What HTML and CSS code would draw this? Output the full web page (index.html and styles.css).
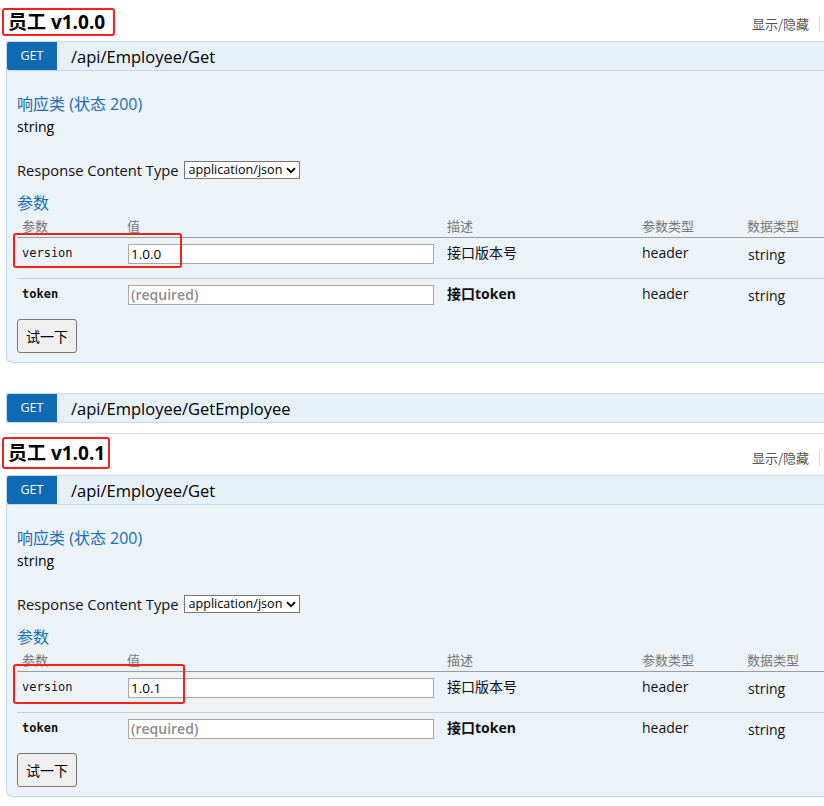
FILE: index.html
```html
<!DOCTYPE html>
<html lang="zh-CN">
<head>
<meta charset="utf-8">
<title>员工 API</title>
<link rel="stylesheet" href="styles.css">
</head>
<body>
<div class="page">

  <section class="resource">
    <div class="res-head">
      <h2 class="res-title"><span class="mark mark-a">员工 v1.0.0</span></h2>
      <ul class="res-opts"><li class="opt">显示/隐藏</li></ul>
    </div>
    <div class="ops">
      <div class="op">
        <div class="op-head"><span class="verb">GET</span><span class="path">/api/Employee/Get</span></div>
        <div class="op-body">
          <h4 class="sec sec-first">响应类 (状态 200)</h4>
          <div class="model">string</div>
          <div class="ctype">Response Content Type <span class="sel-wrap"><select class="sel"><option>application/json</option></select><svg class="chev" width="10" height="7" viewBox="0 0 10 7"><path d="M1 1.2 L5 5.2 L9 1.2" fill="none" stroke="#000" stroke-width="1.8"/></svg></span></div>
          <h4 class="sec sec-params">参数</h4>
          <table class="params">
            <colgroup><col class="c1"><col class="c2"><col class="c3"><col class="c4"><col></colgroup>
            <thead><tr><th>参数</th><th>值</th><th>描述</th><th>参数类型</th><th>数据类型</th></tr></thead>
            <tbody>
              <tr class="row-first"><td class="pname">version</td><td><input class="pval" type="text" value="1.0.0"></td><td class="pdesc">接口版本号</td><td>header</td><td class="dtype">string</td></tr>
              <tr><td class="pname req">token</td><td><input class="pval" type="text" placeholder="(required)"></td><td class="pdesc req">接口token</td><td>header</td><td class="dtype">string</td></tr>
            </tbody>
          </table>
          <button class="try" type="button">试一下</button>
          <div class="note note-a"></div>
        </div>
      </div>
      <div class="op op-collapsed">
        <div class="op-head"><span class="verb">GET</span><span class="path">/api/Employee/GetEmployee</span></div>
      </div>
    </div>
  </section>

  <section class="resource">
    <div class="res-head">
      <h2 class="res-title"><span class="mark mark-b">员工 v1.0.1</span></h2>
      <ul class="res-opts"><li class="opt">显示/隐藏</li></ul>
    </div>
    <div class="ops">
      <div class="op">
        <div class="op-head"><span class="verb">GET</span><span class="path">/api/Employee/Get</span></div>
        <div class="op-body">
          <h4 class="sec sec-first">响应类 (状态 200)</h4>
          <div class="model">string</div>
          <div class="ctype">Response Content Type <span class="sel-wrap"><select class="sel"><option>application/json</option></select><svg class="chev" width="10" height="7" viewBox="0 0 10 7"><path d="M1 1.2 L5 5.2 L9 1.2" fill="none" stroke="#000" stroke-width="1.8"/></svg></span></div>
          <h4 class="sec sec-params">参数</h4>
          <table class="params">
            <colgroup><col class="c1"><col class="c2"><col class="c3"><col class="c4"><col></colgroup>
            <thead><tr><th>参数</th><th>值</th><th>描述</th><th>参数类型</th><th>数据类型</th></tr></thead>
            <tbody>
              <tr class="row-first"><td class="pname">version</td><td><input class="pval" type="text" value="1.0.1"></td><td class="pdesc">接口版本号</td><td>header</td><td class="dtype">string</td></tr>
              <tr><td class="pname req">token</td><td><input class="pval" type="text" placeholder="(required)"></td><td class="pdesc req">接口token</td><td>header</td><td class="dtype">string</td></tr>
            </tbody>
          </table>
          <button class="try" type="button">试一下</button>
          <div class="note note-b"></div>
        </div>
      </div>
    </div>
  </section>

</div>
</body>
</html>
```

FILE: styles.css
```css
html, body {
  margin: 0;
  padding: 0;
  background: #fff;
  overflow: hidden;
}
body {
  font-family: "Open Sans", "Noto Sans CJK SC", sans-serif;
  font-size: 14px;
  color: #000;
}
.page {
  width: 824px;
  overflow: hidden;
}

/* resource heading */
.res-head {
  display: flex;
  justify-content: space-between;
  align-items: flex-start;
  height: 41px;
}
.res-title {
  margin: 0;
  font-size: 19px;
  font-weight: bold;
  line-height: 24px;
}
.mark {
  display: inline-block;
  border: 2px solid #f5221b;
  border-radius: 3px;
  color: #000;
}
.mark-a {
  margin: 8px 0 0 2px;
  padding: 0 8px 0 4px;
}
.mark-b {
  margin: 3px 0 0 2px;
  padding: 2px 3px 2px 4px;
}
.res-opts {
  list-style: none;
  margin: 16px 4px 0 0;
  padding: 0;
  display: flex;
  white-space: nowrap;
}
.opt {
  font-family: "Noto Sans CJK SC", sans-serif;
  font-size: 13px;
  line-height: 16px;
  color: #555;
  padding: 0 10px;
  border-right: 1px solid #ddd;
}

/* operations */
.ops {
  margin-left: 6px;
  padding-bottom: 10px;
  border-bottom: 1px solid #ddd;
}
.op-collapsed {
  margin-top: 30px;
}
.op-head {
  display: flex;
  align-items: center;
  height: 28px;
  background: #e7f0f7;
  border: 1px solid #c3d9ec;
  border-right: 0;
}
.verb {
  width: 50px;
  height: 28px;
  line-height: 28px;
  text-align: center;
  background: #0f6ab4;
  color: #fff;
  font-size: 12.5px;
  border-radius: 2px 0 0 2px;
  flex: none;
}
.path {
  margin-left: 14px;
  font-size: 16.5px;
  color: #000;
}
.op-body {
  position: relative;
  background: #ebf3f9;
  border: 1px solid #c3d9ec;
  border-top: 0;
  border-right: 0;
  border-bottom-left-radius: 6px;
  padding: 0 0 9px 10px;
}
.sec {
  margin: 0;
  font-size: 16px;
  font-weight: normal;
  line-height: 22px;
  color: #1a6cb3;
}
.sec-first {
  padding-top: 22px;
}
.sec-params {
  margin-top: 11px;
}
.model {
  margin-top: 2px;
  line-height: 20px;
  font-size: 14px;
}
.ctype {
  margin-top: 22px;
  line-height: 22px;
  font-size: 14.7px;
  color: #111;
  display: flex;
  align-items: center;
  gap: 5px;
}
.sel-wrap {
  position: relative;
  display: inline-flex;
}
.sel {
  -webkit-appearance: none;
  appearance: none;
  box-sizing: border-box;
  width: 116px;
  height: 18px;
  font-family: "Open Sans", "Noto Sans CJK SC", sans-serif;
  font-size: 12.6px;
  line-height: 16px;
  padding: 0 0 0 4px;
  border: 1px solid #767676;
  background: #fff;
  color: #000;
  border-radius: 0;
}
.chev {
  position: absolute;
  right: 4px;
  top: 6px;
  pointer-events: none;
}

/* parameter table */
.params {
  width: 100%;
  border-collapse: collapse;
  table-layout: fixed;
}
.c1 { width: 105px; }
.c2 { width: 320px; }
.c3 { width: 195px; }
.c4 { width: 105px; }
.params th {
  text-align: left;
  font-weight: normal;
  font-size: 13px;
  color: #777;
  line-height: 18px;
  padding: 3px 5px 2px;
  border-bottom: 1px solid #9c9c9c;
}
.params td {
  vertical-align: top;
  font-size: 14px;
  line-height: 18px;
  color: #111;
  padding: 6px 5px 8px;
}
.params .row-first td {
  padding-bottom: 14px;
  border-bottom: 1px solid #cfcfcf;
}
.params td.dtype {
  padding-top: 8px;
  padding-left: 6px;
}
.params .row-first td.dtype {
  padding-bottom: 12px;
}
.pname {
  font-family: "DejaVu Sans Mono", "Liberation Mono", monospace;
  font-size: 12px !important;
}
.pdesc {
  color: #333;
}
.req {
  font-weight: bold;
}
.pval {
  display: block;
  box-sizing: border-box;
  width: 306px;
  height: 20px;
  margin: 0 0 0 1px;
  padding: 0 2px;
  border: 1px solid #a9a9a9;
  background: #fff;
  font-family: "Open Sans", "Noto Sans CJK SC", sans-serif;
  font-size: 13.5px;
  color: #000;
}
.pval::placeholder {
  color: #8c8c8c;
  font-weight: 600;
  font-size: 14px;
}
.try {
  display: block;
  margin-top: 6px;
  width: 60px;
  height: 34px;
  background: #efefef;
  border: 1px solid #767676;
  border-radius: 3px;
  font-family: "Noto Sans CJK SC", sans-serif;
  font-size: 14px;
  color: #000;
  padding: 0;
}

/* red annotation boxes drawn over the version rows */
.note {
  position: absolute;
  border: 2px solid #f5221b;
  border-radius: 3px;
  box-sizing: border-box;
  pointer-events: none;
}
.note-a {
  left: 6px;
  top: 162px;
  width: 169px;
  height: 35px;
}
.note-b {
  left: 6px;
  top: 159px;
  width: 172px;
  height: 40px;
}
```
